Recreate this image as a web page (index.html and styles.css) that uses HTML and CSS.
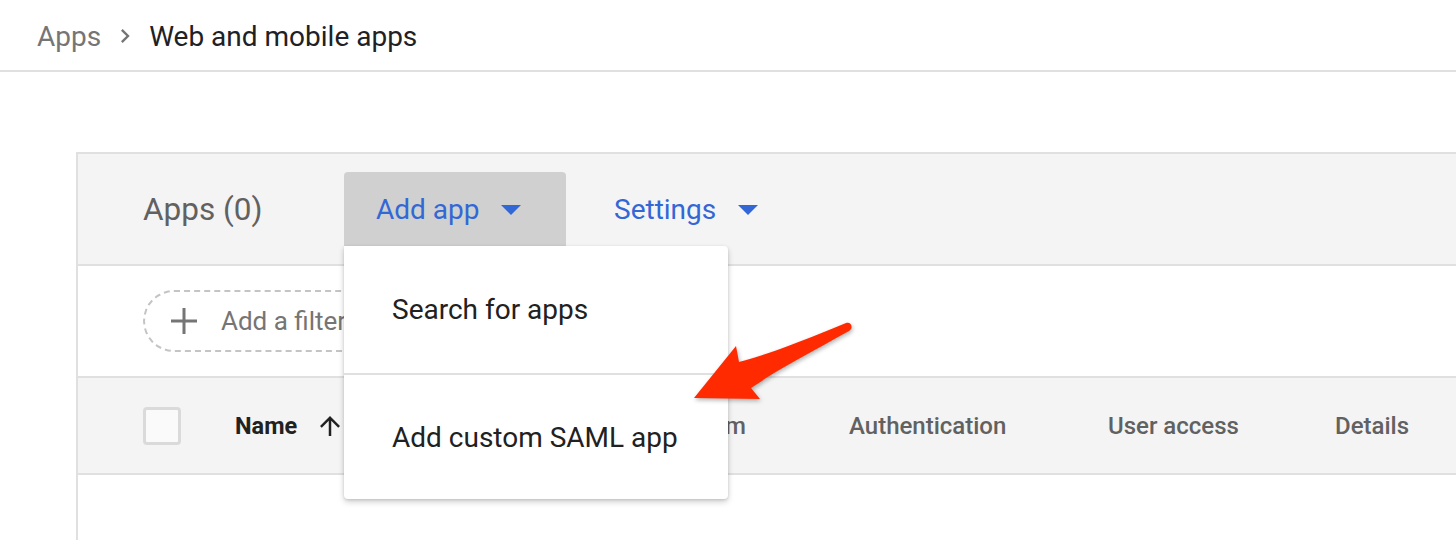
FILE: index.html
```html
<!DOCTYPE html>
<html lang="en">
<head>
<meta charset="utf-8">
<title>Web and mobile apps</title>
<link rel="stylesheet" href="styles.css">
</head>
<body>
<header class="crumbs">
  <span class="crumb-root">Apps</span>
  <svg class="chev" viewBox="0 0 24 24" width="28" height="28"><path d="M10 6L8.59 7.41 13.17 12l-4.58 4.59L10 18l6-6z" fill="#757575"/></svg>
  <span class="crumb-current">Web and mobile apps</span>
</header>

<main class="card">
  <div class="toolbar">
    <div class="title">Apps (0)</div>
    <div class="menu-wrap">
      <button class="btn btn-active">Add app <span class="caret"></span></button>
      <div class="menu">
        <div class="menu-item">Search for apps</div>
        <div class="menu-item">Add custom SAML app</div>
      </div>
    </div>
    <button class="btn">Settings <span class="caret"></span></button>
  </div>

  <div class="filter-row">
    <div class="chip">
      <svg class="plus" viewBox="0 0 28 28" width="28" height="28"><path d="M12.5 1h3v11.5H27v3H15.5V27h-3V15.5H1v-3h11.5z" fill="#757575"/></svg>
      <span class="chip-text">Add a filter</span>
    </div>
  </div>

  <div class="thead">
    <div class="col-check"><span class="checkbox"></span></div>
    <div class="col col-name">Name
      <svg class="sort" viewBox="0 0 24 24" width="30" height="30"><path d="M4 12l1.41 1.41L11 7.83V20h2V7.83l5.58 5.59L20 12l-8-8-8 8z" fill="#212121"/></svg>
    </div>
    <div class="col col-platform">Platform</div>
    <div class="col col-auth">Authentication</div>
    <div class="col col-access">User access</div>
    <div class="col col-details">Details</div>
  </div>
  <div class="tbody"></div>
</main>

<svg class="pointer" viewBox="680 310 190 100" width="190" height="100">
  <path d="M694,398 L736,346 L739,362 C770,354 810,338 846,323 C851,321 854,328 849,331 C815,350 780,368 751,388 L760,399 Z" fill="#ff2a00"/>
</svg>
</body>
</html>
```

FILE: styles.css
```css
* { box-sizing: border-box; }

html, body {
  margin: 0;
  padding: 0;
  background: #ffffff;
  font-family: Roboto, "Noto Sans", Arial, sans-serif;
  overflow: hidden;
  height: 540px;
}

body { position: relative; }

.crumbs {
  height: 72px;
  border-bottom: 2px solid #e0e0e0;
  display: flex;
  align-items: center;
  padding-left: 37px;
  padding-top: 2px;
  font-size: 28px;
}

.crumb-root { color: #757575; }

.chev { margin: 0 10px 0 10px; }

.crumb-current { color: #202124; }

.card {
  margin: 80px 0 0 76px;
  border-left: 2px solid #e0e0e0;
  border-top: 2px solid #e0e0e0;
  height: 400px;
}

.toolbar {
  height: 112px;
  background: #f4f4f4;
  border-bottom: 2px solid #e0e0e0;
  display: flex;
  align-items: center;
  padding-left: 65px;
}

.title {
  font-size: 31.5px;
  color: #616161;
  width: 201px;
}

.menu-wrap {
  position: relative;
  align-self: flex-start;
  margin-top: 18px;
}

.btn {
  font-family: inherit;
  font-size: 28px;
  color: #3367d6;
  background: transparent;
  border: none;
  height: 74px;
  padding: 0 0 0 32px;
  display: flex;
  align-items: center;
  gap: 22px;
  border-radius: 4px 4px 0 0;
  white-space: nowrap;
  cursor: pointer;
}

.btn-active { background: #d0d0d0; width: 222px; }

.menu-wrap + .btn { margin-left: 16px; }

.caret {
  width: 0;
  height: 0;
  border-left: 10px solid transparent;
  border-right: 10px solid transparent;
  border-top: 10px solid #3367d6;
  margin-top: 2px;
}

.menu {
  position: absolute;
  top: 100%;
  left: 0;
  width: 384px;
  background: #ffffff;
  border-radius: 0 4px 4px 4px;
  box-shadow: 0 3px 6px rgba(0, 0, 0, 0.18), 0 1px 3px rgba(0, 0, 0, 0.12);
  z-index: 5;
}

.menu-item {
  height: 127px;
  display: flex;
  align-items: center;
  padding-left: 48px;
  font-size: 28px;
  color: #212121;
}

.menu-item + .menu-item {
  border-top: 2px solid #e0e0e0;
  height: 126px;
}

.filter-row {
  height: 112px;
  border-bottom: 2px solid #e0e0e0;
  display: flex;
  align-items: center;
  padding-left: 65px;
}

.chip {
  height: 62px;
  border: 2px dashed #c4c4c4;
  border-radius: 31px;
  display: flex;
  align-items: center;
  padding: 0 40px 0 25px;
  gap: 23px;
}

.chip-text {
  font-size: 26px;
  color: #757575;
}

.thead {
  height: 97px;
  background: #f4f4f4;
  border-bottom: 2px solid #e0e0e0;
  display: flex;
  align-items: center;
  padding-left: 65px;
}

.col-check { width: 92px; display: flex; }

.checkbox {
  width: 38px;
  height: 38px;
  border: 3px solid #dadada;
  border-radius: 4px;
  background: #fafafa;
}

.col {
  font-size: 24px;
  font-weight: 500;
  color: #616161;
  display: flex;
  align-items: center;
}

.col-name { width: 417px; color: #212121; font-weight: 700; font-size: 23.5px; }
.sort { margin-left: 18px; }
.col-platform { width: 197px; }
.col-auth { width: 259px; }
.col-access { width: 227px; }

.pointer {
  position: absolute;
  left: 680px;
  top: 310px;
  z-index: 10;
  filter: drop-shadow(1px 2px 2px rgba(0, 0, 0, 0.3));
}
```
